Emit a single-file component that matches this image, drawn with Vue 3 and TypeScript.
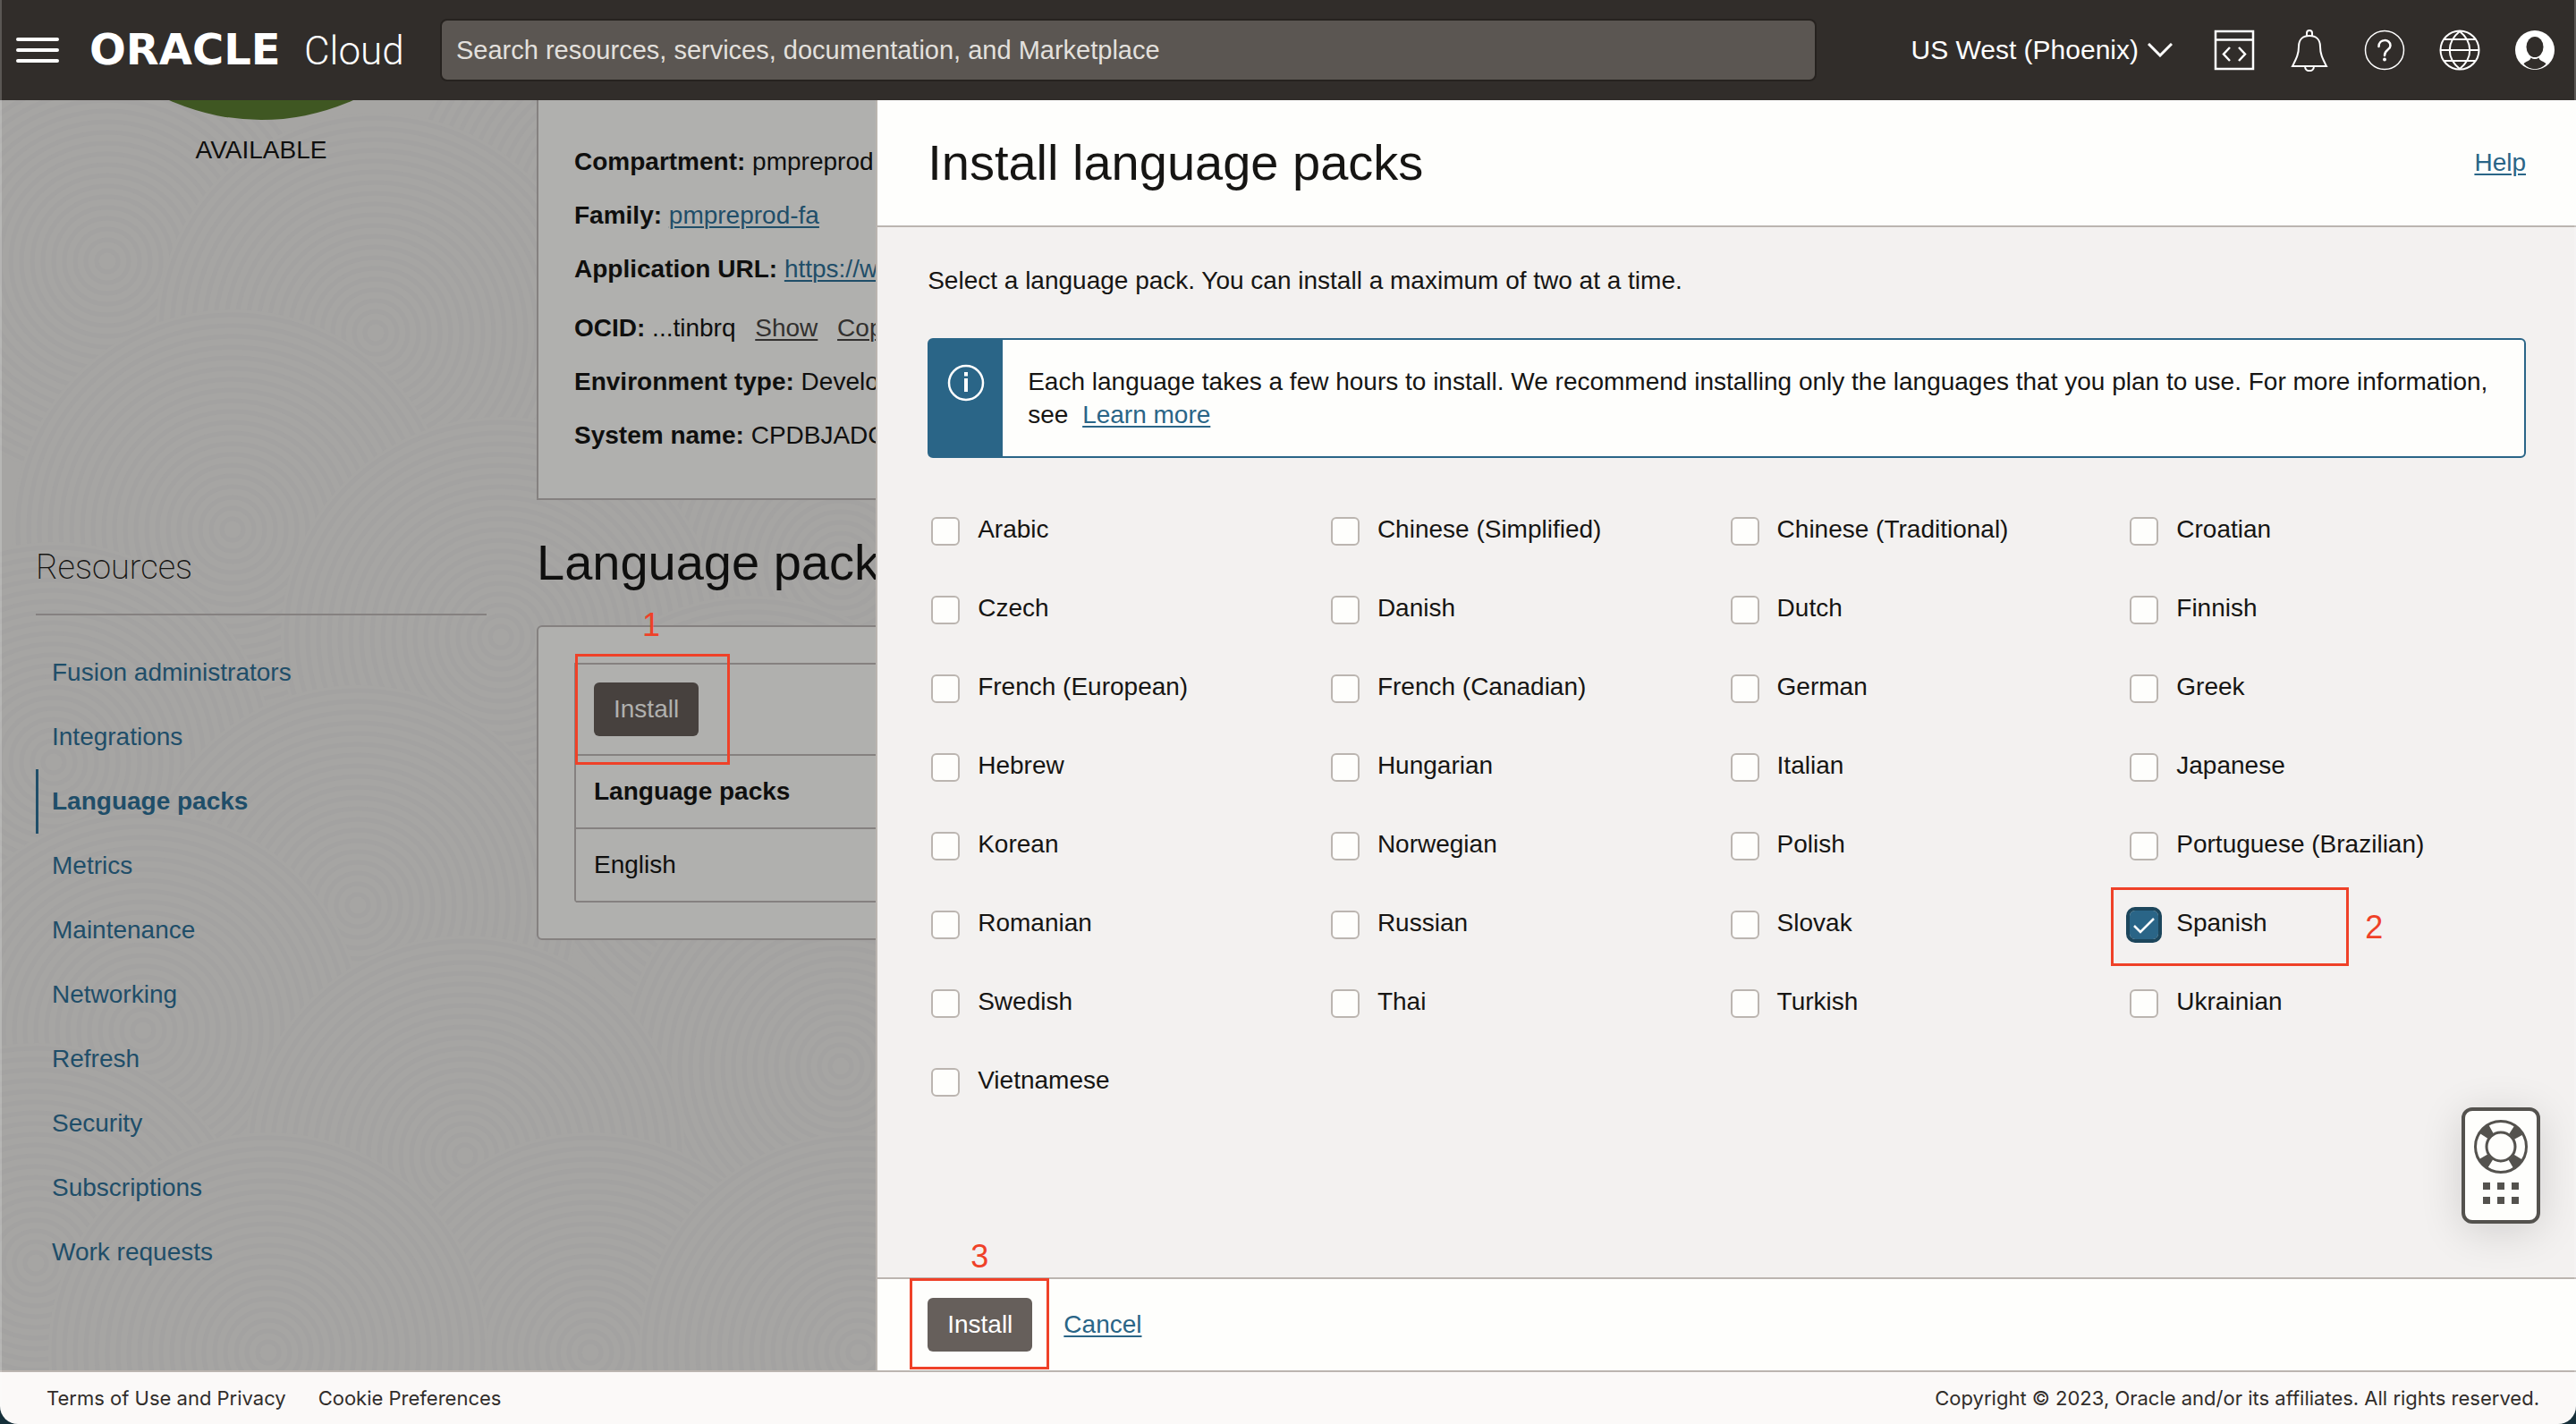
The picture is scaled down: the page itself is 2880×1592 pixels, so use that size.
<script setup lang="ts">
import { ref } from 'vue'

interface Ripple {
  x: number
  y: number
}

const resources: string[] = [
  'Fusion administrators',
  'Integrations',
  'Language packs',
  'Metrics',
  'Maintenance',
  'Networking',
  'Refresh',
  'Security',
  'Subscriptions',
  'Work requests',
]
const activeResource = 'Language packs'

const languages: string[] = [
  'Arabic', 'Chinese (Simplified)', 'Chinese (Traditional)', 'Croatian',
  'Czech', 'Danish', 'Dutch', 'Finnish',
  'French (European)', 'French (Canadian)', 'German', 'Greek',
  'Hebrew', 'Hungarian', 'Italian', 'Japanese',
  'Korean', 'Norwegian', 'Polish', 'Portuguese (Brazilian)',
  'Romanian', 'Russian', 'Slovak', 'Spanish',
  'Swedish', 'Thai', 'Turkish', 'Ukrainian',
  'Vietnamese',
]
const selected = ref<string[]>(['Spanish'])
const highlighted = 'Spanish'

// Overlapping discs of thin rings form the background texture.
const ripples: Ripple[] = [
  { x: 120, y: 180 }, { x: 700, y: 120 }, { x: 420, y: 260 }, { x: 940, y: 520 },
  { x: 260, y: 480 }, { x: 560, y: 600 }, { x: 60, y: 740 }, { x: 840, y: 800 },
  { x: 400, y: 900 }, { x: 940, y: 1080 }, { x: 160, y: 1040 }, { x: 520, y: 1180 },
  { x: 40, y: 1300 }, { x: 660, y: 1400 }, { x: 300, y: 1400 }, { x: 960, y: 1400 },
]
const radii: number[] = Array.from({ length: 20 }, (_, i) => 12 + i * 12)
</script>

<template>
  <div class="window">
    <header class="topbar">
      <button class="icon-button menu" type="button" aria-label="Open menu">
        <svg width="48" height="28" viewBox="0 0 48 28">
          <path d="M2 2H46M2 14H46M2 26H46" stroke="#fff" stroke-width="4" stroke-linecap="round" />
        </svg>
      </button>
      <a class="logo" href="#"><span class="brand">ORACLE</span><span class="product">Cloud</span></a>
      <input class="search" type="search" aria-label="Search" placeholder="Search resources, services, documentation, and Marketplace" />
      <div class="tools">
        <button class="region" type="button">
          US West (Phoenix)
          <svg width="28" height="16" viewBox="0 0 28 16" fill="none" stroke="#fff" stroke-width="3">
            <path d="M1 1L14 14L27 1" />
          </svg>
        </button>
        <button class="icon-button" type="button" aria-label="Developer tools">
          <svg width="46" height="46" viewBox="0 0 46 46" fill="none" stroke="#fff" stroke-width="2.5">
            <path d="M2 2H44V44H2ZM2 11.5H44M18 20L11 27.500L18 35M28 20L35 27.500L28 35" />
          </svg>
        </button>
        <button class="icon-button" type="button" aria-label="Announcements">
          <svg width="46" height="48" viewBox="0 0 46 48" fill="none" stroke="#fff" stroke-width="2">
            <path d="M4 42H42C38 34 35 29 35 20C35 12 30 8 23 8C16 8 11 12 11 20C11 29 8 34 4 42Z" />
            <path d="M20 8V5A3 3 0 0 1 26 5V8M18 42C18 49 28 49 28 42" />
          </svg>
        </button>
        <button class="icon-button" type="button" aria-label="Help">
          <svg width="46" height="46" viewBox="0 0 46 46" fill="none" stroke="#fff" stroke-width="1.5">
            <circle cx="23" cy="23" r="21.500" />
            <path d="M16.500 19C16.500 10 29.500 10 29.500 18C29.500 23 23 22 23 29" stroke-width="2.500" stroke-linecap="round" />
            <circle cx="23" cy="33.500" r="1.200" fill="#fff" />
          </svg>
        </button>
        <button class="icon-button" type="button" aria-label="Language">
          <svg width="46" height="48" viewBox="0 0 46 48" fill="none" stroke="#fff" stroke-width="2">
            <circle cx="23" cy="24" r="21.500" />
            <path d="M23 3C8 15 8 33 23 45C38 33 38 15 23 3ZM2 24H44M6 12H40M6 36H40" />
          </svg>
        </button>
        <button class="icon-button" type="button" aria-label="Profile">
          <svg width="46" height="46" viewBox="0 0 46 46">
            <circle cx="23" cy="23" r="22" fill="#fff" />
            <path d="M10.500 38.500C13 35 18 35.500 18.500 31.500Q23 34.500 27.500 31.500C28 35.500 33 35 35.500 38.500C28 46 18 46 10.500 38.500Z" fill="#312d2a" />
            <ellipse cx="23" cy="19.500" rx="9.500" ry="11.500" fill="#312d2a" />
          </svg>
        </button>
      </div>
    </header>

    <main class="stage">
      <svg class="texture" aria-hidden="true">
        <g v-for="(r, i) in ripples" :key="i">
          <circle :cx="r.x" :cy="r.y" r="246" class="disc" />
          <circle v-for="radius in radii" :key="radius" :cx="r.x" :cy="r.y" :r="radius" class="ring" />
        </g>
      </svg>

      <div class="content">
        <aside class="sidebar">
          <div class="status"><div class="status-disc"></div></div>
          <p class="status-label">AVAILABLE</p>
          <h2 class="side-title">Resources</h2>
          <nav class="side-nav">
            <a v-for="item in resources" :key="item" href="#" :class="{ active: item === activeResource }">{{ item }}</a>
          </nav>
        </aside>

        <section class="details">
          <div class="card facts">
            <p><b>Compartment:</b> pmpreprod</p>
            <p><b>Family:</b> <a href="#">pmpreprod-fa</a></p>
            <p><b>Application URL:</b> <a href="#">https://www</a></p>
            <p class="ocid"><b>OCID:</b> ...tinbrq <a class="action" href="#">Show</a> <a class="action" href="#">Copy</a></p>
            <p><b>Environment type:</b> Development</p>
            <p><b>System name:</b> CPDBJADC</p>
          </div>
          <h1 class="heading">Language packs</h1>
          <div class="card packs">
            <div class="toolbar">
              <div class="step step-one">
                <button class="primary dimmed" type="button">Install</button>
                <span class="frame"></span>
                <span class="number">1</span>
              </div>
            </div>
            <table>
              <thead>
                <tr><th scope="col">Language packs</th></tr>
              </thead>
              <tbody>
                <tr><td>English</td></tr>
              </tbody>
            </table>
          </div>
        </section>
      </div>

      <form class="drawer" @submit.prevent>
        <div class="drawer-head">
          <h2>Install language packs</h2>
          <a href="#">Help</a>
        </div>
        <div class="drawer-body">
          <p class="intro">Select a language pack. You can install a maximum of two at a time.</p>
          <div class="notice">
            <div class="notice-icon">
              <svg width="42" height="42" viewBox="0 0 42 42">
                <circle cx="21" cy="21" r="19" fill="none" stroke="#fff" stroke-width="2.500" />
                <path d="M21 9V13.500M21 16V31" stroke="#fff" stroke-width="4" />
              </svg>
            </div>
            <p>
              <span>Each language takes a few hours to install. We recommend installing only the languages that you plan to use. For more information,</span>
              <span> see </span>
              <a class="learn" href="#">Learn more</a>
            </p>
          </div>
          <div class="languages">
            <label v-for="name in languages" :key="name" :class="{ step: name === highlighted, 'step-two': name === highlighted }">
              <input v-model="selected" type="checkbox" :value="name" />
              <span class="name">{{ name }}</span>
              <template v-if="name === highlighted">
                <span class="frame"></span>
                <span class="number">2</span>
              </template>
            </label>
          </div>
        </div>
        <div class="drawer-foot">
          <div class="step step-three">
            <button class="primary" type="submit">Install</button>
            <span class="frame"></span>
            <span class="number">3</span>
          </div>
          <a href="#">Cancel</a>
        </div>
      </form>

      <button class="support" type="button" aria-label="Support">
        <svg width="60" height="94" viewBox="0 0 60 94">
          <circle cx="30" cy="30" r="22.500" fill="none" stroke="#54524e" stroke-width="11" stroke-dasharray="11 24.343" stroke-dashoffset="-12.200" />
          <circle cx="30" cy="30" r="28.500" fill="none" stroke="#54524e" stroke-width="3" />
          <circle cx="30" cy="30" r="16" fill="none" stroke="#54524e" stroke-width="3" />
          <path d="M10 78H18M26 78H34M42 78H50M10 94H18M26 94H34M42 94H50" transform="translate(0 -4)" stroke="#54524e" stroke-width="8" />
        </svg>
      </button>
    </main>

    <footer class="footer">
      <a href="#">Terms of Use and Privacy</a>
      <a href="#">Cookie Preferences</a>
      <span class="copyright">Copyright © 2023, Oracle and/or its affiliates. All rights reserved.</span>
    </footer>
  </div>
</template>

<style>
body {
  margin: 0;
  background: #16303a;
}
</style>

<style scoped>
.window {
  position: relative;
  display: flex;
  flex-direction: column;
  min-height: 100vh;
  overflow: hidden;
  border-radius: 0 0 20px 20px;
  background: #fbf9f8;
  color: #161513;
  font: 28px/40px "Liberation Sans", Arial, sans-serif;
}
.window::after {
  content: "";
  position: absolute;
  inset: 0;
  box-shadow: inset 2px 0 rgba(255, 255, 255, 0.2), inset -2px 0 rgba(255, 255, 255, 0.2);
  pointer-events: none;
}
h1, h2, p { margin: 0; font-weight: 400; }
a {
  color: #2a6587;
  text-decoration-thickness: 2px;
  text-underline-offset: 3px;
}
button { font: inherit; cursor: pointer; }

.topbar {
  display: flex;
  align-items: center;
  gap: 34px;
  height: 112px;
  padding: 0 23px 0 18px;
  background: #312d2a;
  color: #fff;
}
.icon-button {
  display: flex;
  flex: none;
  padding: 0;
  border: 0;
  background: none;
}
.logo {
  display: grid;
  grid-template-columns: 240px 1fr;
  flex: 0 0 358px;
  align-items: baseline;
  color: #fff;
  text-decoration: none;
  white-space: nowrap;
}
.brand { font: 700 48px/56px "DejaVu Sans", sans-serif; }
.product { font: 300 44px/56px Roboto, sans-serif; }
.search {
  box-sizing: border-box;
  width: 54.2%;
  height: 70px;
  padding: 0 16px;
  border: 2px solid #26221f;
  border-radius: 8px;
  background: #5b5652;
  color: #fff;
  font: 29px "Liberation Sans", Arial, sans-serif;
}
.search::placeholder { color: #e3e0dd; opacity: 1; }
.tools {
  display: flex;
  align-items: center;
  gap: 38px;
  margin-left: auto;
}
.region {
  display: flex;
  align-items: center;
  gap: 10px;
  margin-right: 8px;
  padding: 0;
  border: 0;
  background: none;
  color: #fff;
  font-size: 30px;
  white-space: nowrap;
}

.stage {
  position: relative;
  flex: 1;
  overflow: hidden;
  background: #a6a5a3;
}
.texture {
  position: absolute;
  inset: 0;
  width: 100%;
  height: 100%;
}
.disc { fill: #a6a5a3; }
.ring { fill: none; stroke: #a3a2a1; stroke-width: 5px; }
.content {
  position: relative;
  display: flex;
  gap: 56px;
  padding-left: 40px;
}
.sidebar { flex: 0 0 504px; }
.status {
  display: flex;
  align-items: flex-end;
  height: 22px;
  overflow: hidden;
}
.status-disc {
  flex: none;
  width: 100%;
  aspect-ratio: 1;
  border-radius: 50%;
  background: #3f5722;
}
.status-label { margin-top: 14px; text-align: center; color: #0f0f0e; }
.side-title {
  margin-top: 422px;
  padding-bottom: 28px;
  border-bottom: 2px solid #858180;
  font: 200 38px/48px Roboto, sans-serif;
}
.side-nav { display: flex; flex-direction: column; margin-top: 28px; }
.side-nav a {
  padding-left: 18px;
  color: #1f4e69;
  line-height: 72px;
  text-decoration: none;
}
.side-nav a.active {
  padding-left: 15px;
  border-left: 3px solid #1f4e69;
  font-weight: 700;
}

.details { flex: 1; color: #0f0f0e; }
.card {
  padding: 40px;
  border: 2px solid #858180;
  background: #b0b0ae;
}
.facts { border-top: 0; padding-top: 39px; line-height: 60px; }
.facts a { color: #1f4e69; }
.facts a.action { margin-left: 14px; color: #32302f; }
.facts .ocid { padding-top: 6px; }
.heading { margin: 38px 0; font-size: 56px; line-height: 64px; }
.packs { border-radius: 6px; }
.toolbar {
  display: flex;
  padding: 20px;
  border: 2px solid #858180;
}
table {
  width: 100%;
  border-collapse: separate;
  border-spacing: 0;
  border-left: 2px solid #858180;
  border-radius: 0 0 4px 4px;
}
th, td {
  height: 80px;
  padding: 0 20px;
  border-bottom: 2px solid #858180;
  text-align: left;
}
.primary {
  height: 60px;
  padding: 0 22px;
  border: 0;
  border-radius: 6px;
  background: #665f5b;
  color: #fff;
}
.primary.dimmed { background: #47413e; color: #b0b0ae; }

.drawer {
  position: absolute;
  inset: 0 0 0 34%;
  display: flex;
  flex-direction: column;
  border-left: 2px solid #bbb5b0;
  background: #f3f1f0;
}
.drawer-head {
  display: flex;
  align-items: center;
  justify-content: space-between;
  height: 140px;
  padding: 0 56px;
  border-bottom: 2px solid #bbb5b0;
  background: #fefefc;
}
.drawer-head h2 { font-size: 56px; line-height: 64px; }
.drawer-body { flex: 1; padding: 40px 56px 0; }
.notice {
  display: flex;
  margin-top: 44px;
  border: 2px solid #2a6587;
  border-radius: 6px;
  background: #fefefc;
}
.notice-icon {
  flex: 0 0 82px;
  padding-top: 27px;
  background: #2a6587;
  text-align: center;
}
.notice p { padding: 28px 20px 28px 28px; line-height: 37px; }
.learn { margin-left: 8px; }
.languages {
  display: grid;
  grid-template-columns: repeat(4, 1fr);
  margin-top: 38px;
}
.languages label {
  display: flex;
  align-items: center;
  gap: 20px;
  height: 88px;
  padding-left: 4px;
}
.name { padding-bottom: 4px; }
.languages input {
  flex: none;
  width: 32px;
  height: 32px;
  margin: 0;
  border: 2px solid #bbb5b0;
  border-radius: 6px;
  background: #fefefc;
  appearance: none;
}
.languages input:checked {
  border: 0;
  outline: 4px solid #1c465c;
  background: #2a6587 url("data:image/svg+xml,%3Csvg xmlns='http://www.w3.org/2000/svg' viewBox='0 0 32 32'%3E%3Cpath d='M5 17l7 7L27 9' fill='none' stroke='white' stroke-width='2.500'/%3E%3C/svg%3E");
}
.drawer-foot {
  display: flex;
  align-items: center;
  gap: 35px;
  height: 102px;
  padding: 0 56px;
  border-top: 2px solid #bbb5b0;
  background: #fefefc;
}

/* Numbered walkthrough marks laid over the controls */
.step { position: relative; }
.frame { position: absolute; border: 3px solid #ef4128; pointer-events: none; }
.number { position: absolute; color: #ef4128; font-size: 36px; line-height: 40px; }
.step-one .frame { inset: -32px -35px -32px -21px; }
.step-one .number { left: 54px; top: -84px; }
.step-two .frame { top: 2px; left: -17px; width: 260px; height: 82px; }
.step-two .number { top: 27px; left: 267px; }
.step-three .frame { inset: -22px -19px -20px -20px; }
.step-three .number { left: 48px; top: -66px; }

.support {
  position: absolute;
  right: 40px;
  bottom: 164px;
  display: flex;
  justify-content: center;
  width: 88px;
  height: 130px;
  padding: 10px 0 0;
  border: 4px solid #54524e;
  border-radius: 12px;
  background: #fefefc;
  box-shadow: 0 8px 48px rgba(0, 0, 0, 0.14);
}

.footer {
  display: flex;
  align-items: center;
  gap: 36px;
  height: 58px;
  padding: 0 41px 0 52px;
  border-top: 2px solid #bbb5b0;
  color: #312d2a;
  font: 22px/32px Inter, sans-serif;
}
.footer a { color: inherit; text-decoration: none; }
.copyright { margin-left: auto; }
</style>
